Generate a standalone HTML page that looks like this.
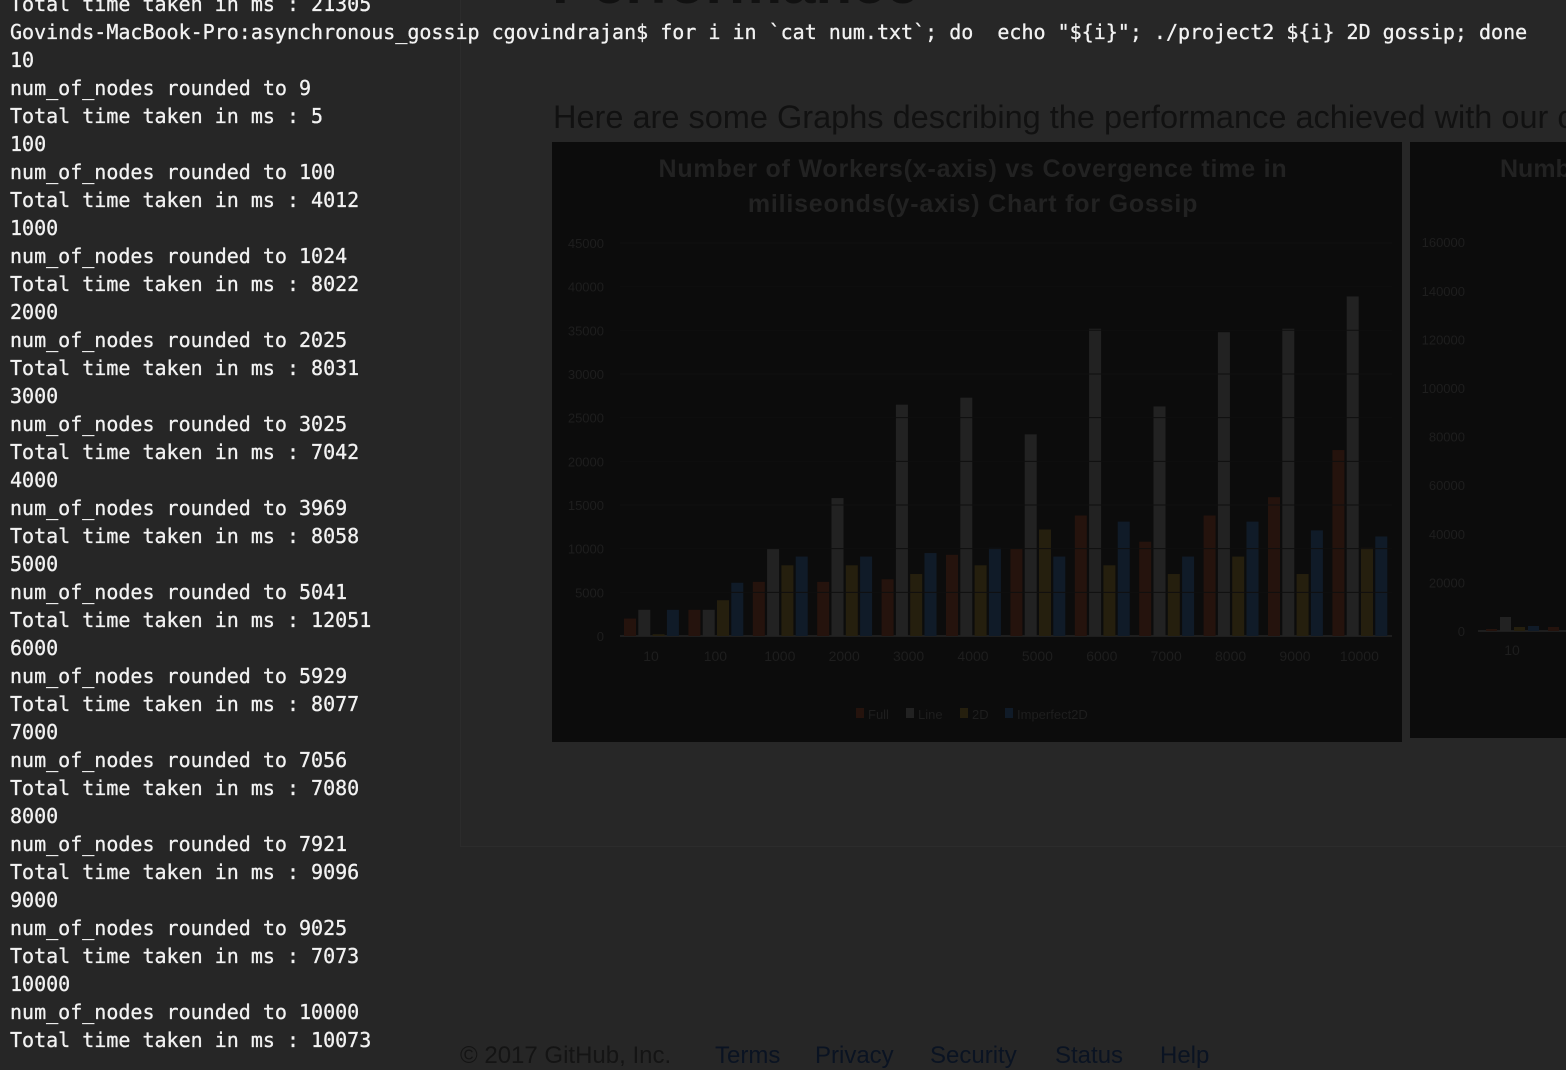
<!DOCTYPE html>
<html><head><meta charset="utf-8"><style>
html,body{margin:0;padding:0;width:1566px;height:1058px;overflow:hidden;background:#262626;}
#term{position:absolute;left:10px;top:-10px;font-family:"DejaVu Sans Mono","Liberation Mono",monospace;font-size:20px;line-height:28px;color:#f2f2f2;white-space:pre;z-index:5;-webkit-text-stroke:0.3px #f2f2f2}
.panel{position:absolute;left:460px;top:-10px;width:1120px;height:855px;border:1px solid #2c2c2c;background:#272727;}
.h1{position:absolute;left:552px;top:-52px;font:bold 60px "Liberation Sans",sans-serif;color:#111;}
.p{position:absolute;left:553px;top:99px;font:32.5px "Liberation Sans",sans-serif;color:#111;white-space:nowrap}
.foot{position:absolute;top:1042px;font:24px "Liberation Sans",sans-serif;color:#141414;}
.foot.l{color:#0a1322}
</style></head><body>
<div class="panel"></div>
<div class="h1">Performance</div>
<div class="p">Here are some Graphs describing the performance achieved with our code</div>
<svg id="s" width="1566" height="1058" style="position:absolute;left:0;top:0" font-family="Liberation Sans,sans-serif">
<rect x="552" y="142" width="850" height="600" fill="#0c0c0c"/>
<rect x="1410" y="142" width="170" height="596" fill="#0c0c0c"/>
<text x="973" y="177" text-anchor="middle" font-size="25" font-weight="bold" fill="#222" letter-spacing="0.8">Number of Workers(x-axis) vs Covergence time in</text>
<text x="973" y="212" text-anchor="middle" font-size="25" font-weight="bold" fill="#222" letter-spacing="0.8">miliseonds(y-axis) Chart for Gossip</text>
<text x="1500" y="177" font-size="25" font-weight="bold" fill="#222">Numb</text>
<line x1="620" y1="636" x2="1392" y2="636" stroke="#1e1e1e" stroke-width="2"/>
<g id="bars"></g>
<g font-size="13" fill="#1e1e1e">
<rect x="856" y="708" width="8" height="10" fill="#25130d"/><text x="868" y="719">Full</text>
<rect x="906" y="708" width="8" height="10" fill="#222"/><text x="918" y="719">Line</text>
<rect x="960" y="708" width="8" height="10" fill="#251f0e"/><text x="972" y="719">2D</text>
<rect x="1005" y="708" width="8" height="10" fill="#101b28"/><text x="1017" y="719">Imperfect2D</text>
</g>
</svg>
<div id="term">Total time taken in ms : 21305
Govinds-MacBook-Pro:asynchronous_gossip cgovindrajan$ for i in `cat num.txt`; do  echo "${i}"; ./project2 ${i} 2D gossip; done
10
num_of_nodes rounded to 9
Total time taken in ms : 5
100
num_of_nodes rounded to 100
Total time taken in ms : 4012
1000
num_of_nodes rounded to 1024
Total time taken in ms : 8022
2000
num_of_nodes rounded to 2025
Total time taken in ms : 8031
3000
num_of_nodes rounded to 3025
Total time taken in ms : 7042
4000
num_of_nodes rounded to 3969
Total time taken in ms : 8058
5000
num_of_nodes rounded to 5041
Total time taken in ms : 12051
6000
num_of_nodes rounded to 5929
Total time taken in ms : 8077
7000
num_of_nodes rounded to 7056
Total time taken in ms : 7080
8000
num_of_nodes rounded to 7921
Total time taken in ms : 9096
9000
num_of_nodes rounded to 9025
Total time taken in ms : 7073
10000
num_of_nodes rounded to 10000
Total time taken in ms : 10073</div>
<div class="foot" style="left:460px">© 2017 GitHub, Inc.</div>
<div class="foot l" style="left:715px">Terms</div>
<div class="foot l" style="left:815px">Privacy</div>
<div class="foot l" style="left:930px">Security</div>
<div class="foot l" style="left:1055px">Status</div>
<div class="foot l" style="left:1160px">Help</div>
<script>
var NS="http://www.w3.org/2000/svg",g=document.getElementById('bars'),s=document.getElementById('s');
function el(t,a,txt){var e=document.createElementNS(NS,t);for(var k in a)e.setAttribute(k,a[k]);if(txt!=null)e.textContent=txt;return e;}
var d=[[2000,3000,6200,6200,6500,9300,10000,13800,10800,13800,15900,21300],
[3000,3000,10000,15800,26500,27300,23100,35200,26300,34800,35200,38900],
[200,4100,8100,8100,7100,8100,12200,8100,7100,9100,7100,10100],
[3000,6100,9100,9100,9500,10100,9100,13100,9100,13100,12100,11400]];
var c=["#25130d","#222","#251f0e","#101b28"],cats=["10","100","1000","2000","3000","4000","5000","6000","7000","8000","9000","10000"];
for(var i=0;i<12;i++){var cx=651+i*64.4;
for(var j=0;j<4;j++){var h=d[j][i]*0.00873;g.appendChild(el('rect',{x:cx-27+j*14.3,y:636-h,width:12,height:h,fill:c[j]}));}
s.appendChild(el('text',{x:cx,y:661,'text-anchor':'middle','font-size':14,fill:'#1e1e1e'},cats[i]));}
for(var k=0;k<=9;k++){var y=636-k*43.67;s.appendChild(el('text',{x:604,y:y+5,'text-anchor':'end','font-size':13,fill:'#1e1e1e'},String(k*5000)));
if(k>0)s.appendChild(el('line',{x1:620,y1:y,x2:1392,y2:y,stroke:'#0f0f0f'}));}
for(var k=0;k<=8;k++){var y=631-k*48.6;s.appendChild(el('text',{x:1465,y:y+5,'text-anchor':'end','font-size':13,fill:'#1e1e1e'},String(k*20000)));}
s.appendChild(el('line',{x1:1478,y1:631,x2:1566,y2:631,stroke:'#1e1e1e','stroke-width':2}));
s.appendChild(el('text',{x:1512,y:655,'text-anchor':'middle','font-size':14,fill:'#1e1e1e'},'10'));
[[1486,2],[1500,14],[1514,4],[1528,5],[1548,4]].forEach(function(b,i){s.appendChild(el('rect',{x:b[0],y:631-b[1],width:11,height:b[1],fill:c[i%4]}));});
</script>
</body></html>
